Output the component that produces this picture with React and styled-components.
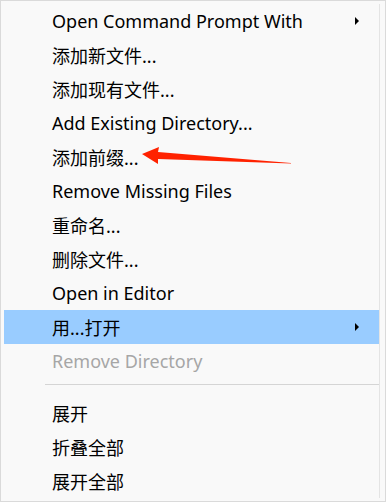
import React from 'react';
import styled, { createGlobalStyle } from 'styled-components';

const GlobalStyle = createGlobalStyle`
  html, body {
    margin: 0;
    padding: 0;
    background: #f0f0f0;
  }
`;

const Menu = styled.div`
  position: relative;
  box-sizing: border-box;
  width: 386px;
  height: 502px;
  padding: 3px 5px 3px 3px;
  border: 1px solid #dadada;
  background: #f9f9f9;
  font-family: "Noto Sans", "Noto Sans CJK SC", sans-serif;
  font-size: 18px;
  color: #000;
`;

const List = styled.div`
  display: flex;
  flex-direction: column;
  border-right: 1px solid #e4e4e4;
`;

const Item = styled.div`
  display: flex;
  align-items: center;
  justify-content: space-between;
  height: 34px;
  padding: 0 20px 0 48px;
  background: ${props => (props.active ? '#99ccff' : 'transparent')};
  color: ${props => (props.disabled ? '#a6a6a6' : '#000')};
  white-space: nowrap;
`;

const SubArrow = styled.span`
  width: 0;
  height: 0;
  border-top: 4px solid transparent;
  border-bottom: 4px solid transparent;
  border-left: 4px solid #000;
`;

const Separator = styled.div`
  height: 1px;
  margin: 6px 0 11px 41px;
  background: #d5d5d5;
`;

const Pointer = styled.svg`
  position: absolute;
  left: 138px;
  top: 144px;
  pointer-events: none;
`;

const top = [
  { label: 'Open Command Prompt With', sub: true },
  { label: '添加新文件...' },
  { label: '添加现有文件...' },
  { label: 'Add Existing Directory...' },
  { label: '添加前缀...' },
  { label: 'Remove Missing Files' },
  { label: '重命名...' },
  { label: '删除文件...' },
  { label: 'Open in Editor' },
  { label: '用...打开', sub: true, active: true },
  { label: 'Remove Directory', disabled: true },
];

const bottom = [{ label: '展开' }, { label: '折叠全部' }, { label: '展开全部' }];

function MenuItem({ item }) {
  return (
    <Item active={item.active} disabled={item.disabled}>
      <span>{item.label}</span>
      {item.sub && <SubArrow />}
    </Item>
  );
}

export default function App() {
  return (
    <>
      <GlobalStyle />
      <Menu>
        <List>
          {top.map(item => (
            <MenuItem key={item.label} item={item} />
          ))}
          <Separator />
          {bottom.map(item => (
            <MenuItem key={item.label} item={item} />
          ))}
        </List>
        <Pointer width="160" height="24" viewBox="0 0 160 24">
          <path
            d="M3 9 L20 2 L19 7 L152 18 L152 18.6 L19 14 L19 19 Z"
            fill="#ff2200"
          />
        </Pointer>
      </Menu>
    </>
  );
}
